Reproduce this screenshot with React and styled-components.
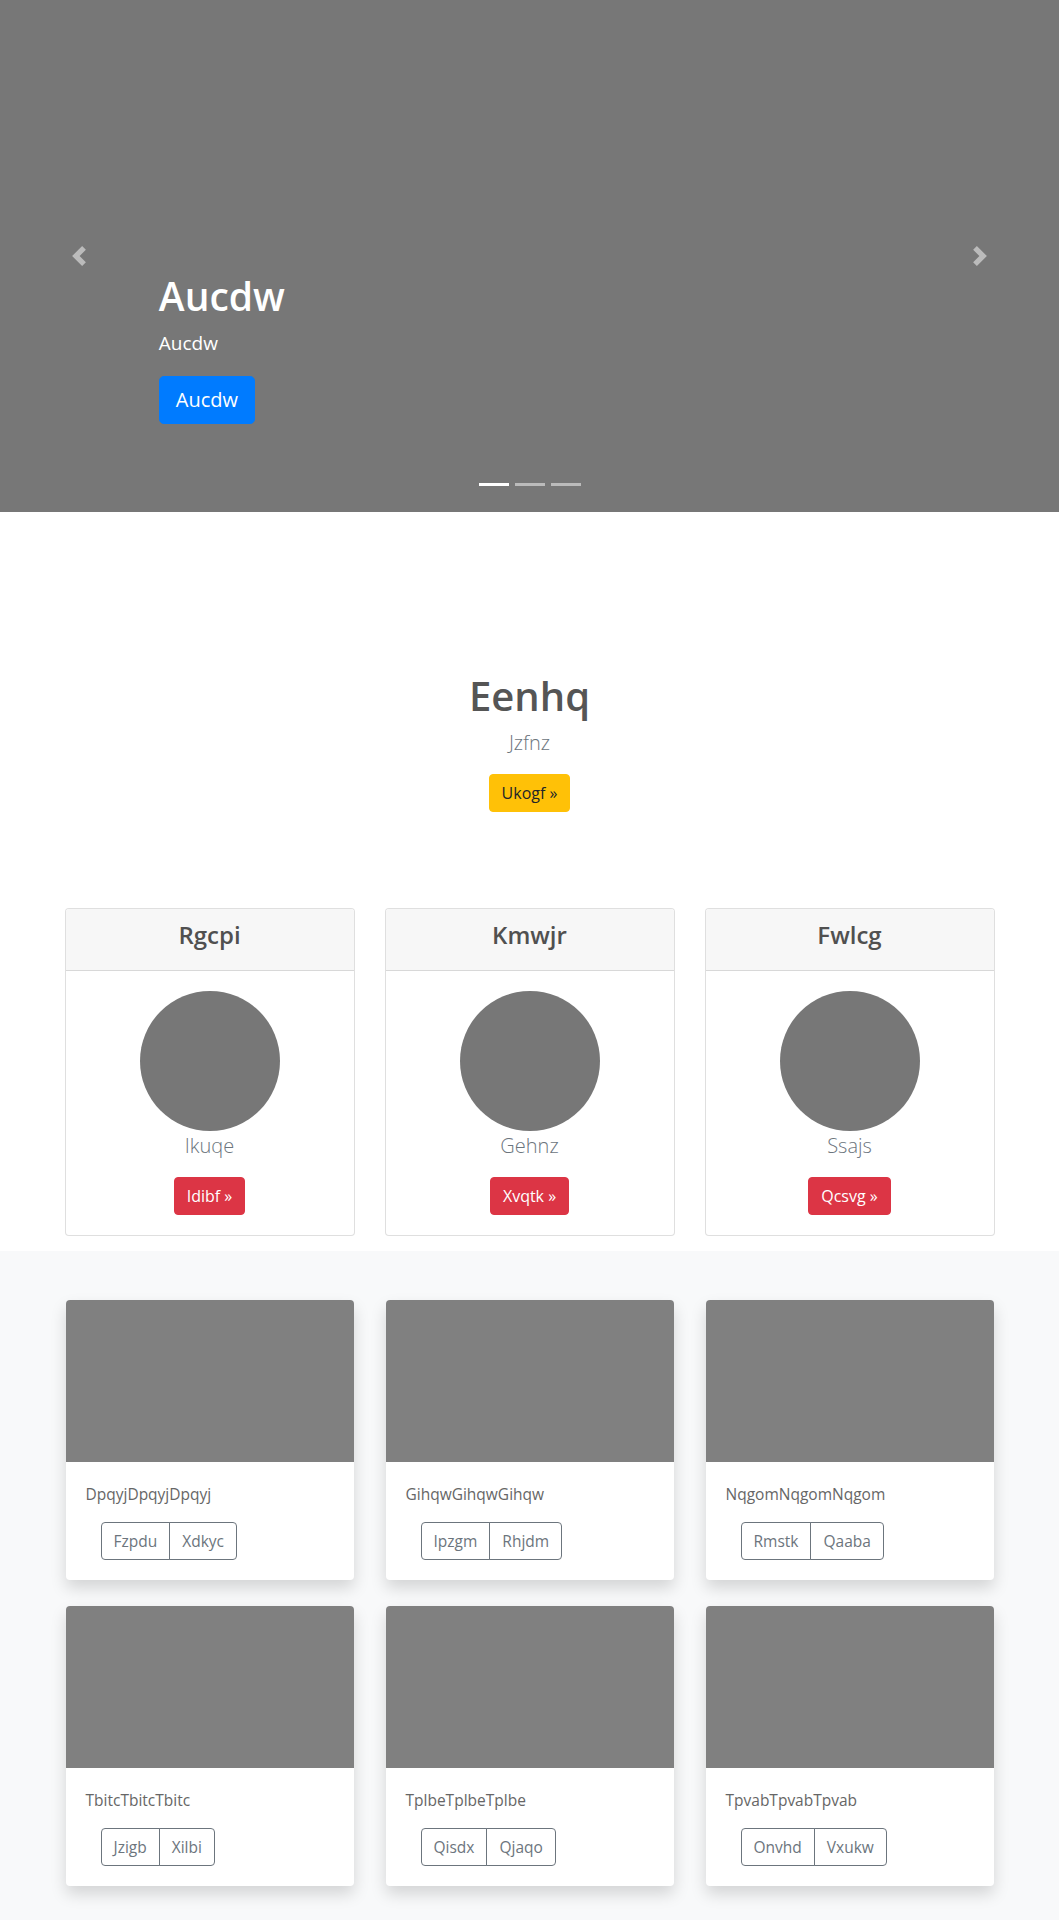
import React from "react";
import styled, { createGlobalStyle } from "styled-components";

const Global = createGlobalStyle`
  html, body { margin: 0; padding: 0; }
  body {
    font-family: "Open Sans", "Noto Sans", "Liberation Sans", sans-serif;
    font-size: 16px;
    line-height: 1.5;
    color: #555;
    background: #fff;
  }
  * { box-sizing: border-box; }
`;

const Carousel = styled.section`
  position: relative;
  height: 512px;
  background: #777;
  overflow: hidden;
`;

const Slide = styled.div`
  height: 100%;
  display: flex;
  flex-direction: column;
  align-items: flex-start;
  padding: 272px 15% 0;
  color: #fff;
`;

const SlideTitle = styled.h1`
  margin: 0 0 8px;
  font-size: 39px;
  line-height: 48px;
  font-weight: 600;
`;

const SlideText = styled.p`
  margin: 0 0 18px;
  font-size: 19px;
  line-height: 30px;
`;

const Button = styled.a`
  display: inline-block;
  text-decoration: none;
  cursor: pointer;
  font-size: ${(p) => (p.$lg ? "20px" : "16px")};
  line-height: ${(p) => (p.$lg ? "30px" : "24px")};
  padding: ${(p) => (p.$lg ? "8px 16px" : "6px 12px")};
  border-radius: ${(p) => (p.$lg ? "4.8px" : "4px")};
  border: 1px solid ${(p) => p.$bg};
  background: ${(p) => p.$bg};
  color: ${(p) => p.$fg};
  font-weight: 400;
`;

const Control = styled.a`
  position: absolute;
  top: 0;
  bottom: 0;
  ${(p) => (p.$side === "left" ? "left: 0;" : "right: 0;")}
  width: 15%;
  display: flex;
  align-items: center;
  justify-content: center;
  opacity: 0.5;
`;

const Indicators = styled.ol`
  position: absolute;
  left: 0;
  right: 0;
  bottom: 16px;
  margin: 0;
  padding: 0;
  list-style: none;
  display: flex;
  justify-content: center;
  gap: 6px;
`;

const Indicator = styled.li`
  width: 30px;
  height: 3px;
  margin: 10px 0;
  background: #fff;
  opacity: ${(p) => (p.$active ? 1 : 0.5)};
`;

const Hero = styled.section`
  display: flex;
  flex-direction: column;
  align-items: center;
  text-align: center;
  padding: 160px 15px 96px;
`;

const HeroTitle = styled.h1`
  margin: 0 0 8px;
  font-size: 40px;
  line-height: 1.2;
  font-weight: 600;
  color: #555;
`;

const Lead = styled.p`
  margin: 0 0 16px;
  font-size: 20px;
  line-height: 30px;
  font-weight: 300;
  color: #6c757d;
`;

const Container = styled.div`
  width: ${(p) => p.$w || 930}px;
  margin: 0 auto;
`;

const Grid = styled.div`
  display: grid;
  grid-template-columns: repeat(3, 1fr);
  column-gap: ${(p) => p.$gap}px;
  row-gap: ${(p) => p.$rowGap || 0}px;
`;

const FeatureCard = styled.div`
  border: 1px solid rgba(0, 0, 0, 0.125);
  border-radius: 4px;
  background: #fff;
  overflow: hidden;
  text-align: center;
`;

const FeatureHeader = styled.div`
  background: #f7f7f7;
  border-bottom: 1px solid rgba(0, 0, 0, 0.125);
  padding: 12px 20px;
`;

const FeatureTitle = styled.h4`
  margin: 0 0 8px;
  font-size: 24px;
  line-height: 1.2;
  font-weight: 600;
  color: #505050;
`;

const FeatureBody = styled.div`
  padding: 20px;
  display: flex;
  flex-direction: column;
  align-items: center;
`;

const Avatar = styled.div`
  width: 140px;
  height: 140px;
  border-radius: 50%;
  background: #777;
`;

const FeaturesSection = styled.section`
  padding-bottom: 15px;
`;

const Album = styled.section`
  background: #f8f9fa;
  padding: 49px 0 48px;
`;

const AlbumCard = styled.div`
  background: #fff;
  border-radius: 4px;
  overflow: hidden;
  box-shadow: 0 8px 16px rgba(0, 0, 0, 0.15);
`;

const Thumb = styled.div`
  height: 162px;
  background: #808080;
`;

const AlbumBody = styled.div`
  padding: 20px;
`;

const AlbumText = styled.p`
  margin: 0 0 16px;
  font-size: 15.5px;
  line-height: 24px;
  color: #666;
`;

const BtnGroup = styled.div`
  display: inline-flex;
  margin-left: 15px;
`;

const OutlineBtn = styled.button`
  font-family: inherit;
  font-size: 15.5px;
  line-height: 24px;
  padding: 6px 12px;
  background: transparent;
  color: #6c757d;
  border: 1px solid #6c757d;
  border-radius: 0;
  &:first-child { border-radius: 4px 0 0 4px; }
  &:last-child { border-radius: 0 4px 4px 0; margin-left: -1px; }
`;

const Chevron = ({ dir }) => (
  <svg width="20" height="20" viewBox="0 0 8 8" fill="#fff">
    <path
      d={
        dir === "prev"
          ? "M5.25 0l-4 4 4 4 1.5-1.5L4.25 4l2.5-2.5L5.25 0z"
          : "M2.75 0l-1.5 1.5L3.75 4l-2.5 2.5L2.75 8l4-4-4-4z"
      }
    />
  </svg>
);

const features = [
  { title: "Rgcpi", lead: "Ikuqe", btn: "Idibf »" },
  { title: "Kmwjr", lead: "Gehnz", btn: "Xvqtk »" },
  { title: "Fwlcg", lead: "Ssajs", btn: "Qcsvg »" },
];

const albums = [
  { text: "DpqyjDpqyjDpqyj", a: "Fzpdu", b: "Xdkyc" },
  { text: "GihqwGihqwGihqw", a: "Ipzgm", b: "Rhjdm" },
  { text: "NqgomNqgomNqgom", a: "Rmstk", b: "Qaaba" },
  { text: "TbitcTbitcTbitc", a: "Jzigb", b: "Xilbi" },
  { text: "TplbeTplbeTplbe", a: "Qisdx", b: "Qjaqo" },
  { text: "TpvabTpvabTpvab", a: "Onvhd", b: "Vxukw" },
];

export default function App() {
  return (
    <>
      <Global />
      <Carousel>
        <Slide>
          <SlideTitle>Aucdw</SlideTitle>
          <SlideText>Aucdw</SlideText>
          <Button $lg $bg="#007bff" $fg="#fff">Aucdw</Button>
        </Slide>
        <Control $side="left"><Chevron dir="prev" /></Control>
        <Control $side="right"><Chevron dir="next" /></Control>
        <Indicators>
          <Indicator $active />
          <Indicator />
          <Indicator />
        </Indicators>
      </Carousel>

      <Hero>
        <HeroTitle>Eenhq</HeroTitle>
        <Lead>Jzfnz</Lead>
        <Button $bg="#ffc107" $fg="#212529">Ukogf »</Button>
      </Hero>

      <FeaturesSection>
        <Container $w={930}>
          <Grid $gap={30}>
            {features.map((f) => (
              <FeatureCard key={f.title}>
                <FeatureHeader>
                  <FeatureTitle>{f.title}</FeatureTitle>
                </FeatureHeader>
                <FeatureBody>
                  <Avatar />
                  <Lead>{f.lead}</Lead>
                  <Button $bg="#dc3545" $fg="#fff">{f.btn}</Button>
                </FeatureBody>
              </FeatureCard>
            ))}
          </Grid>
        </Container>
      </FeaturesSection>

      <Album>
        <Container $w={928}>
          <Grid $gap={32} $rowGap={26}>
            {albums.map((c) => (
              <AlbumCard key={c.text}>
                <Thumb />
                <AlbumBody>
                  <AlbumText>{c.text}</AlbumText>
                  <BtnGroup>
                    <OutlineBtn>{c.a}</OutlineBtn>
                    <OutlineBtn>{c.b}</OutlineBtn>
                  </BtnGroup>
                </AlbumBody>
              </AlbumCard>
            ))}
          </Grid>
        </Container>
      </Album>
    </>
  );
}
